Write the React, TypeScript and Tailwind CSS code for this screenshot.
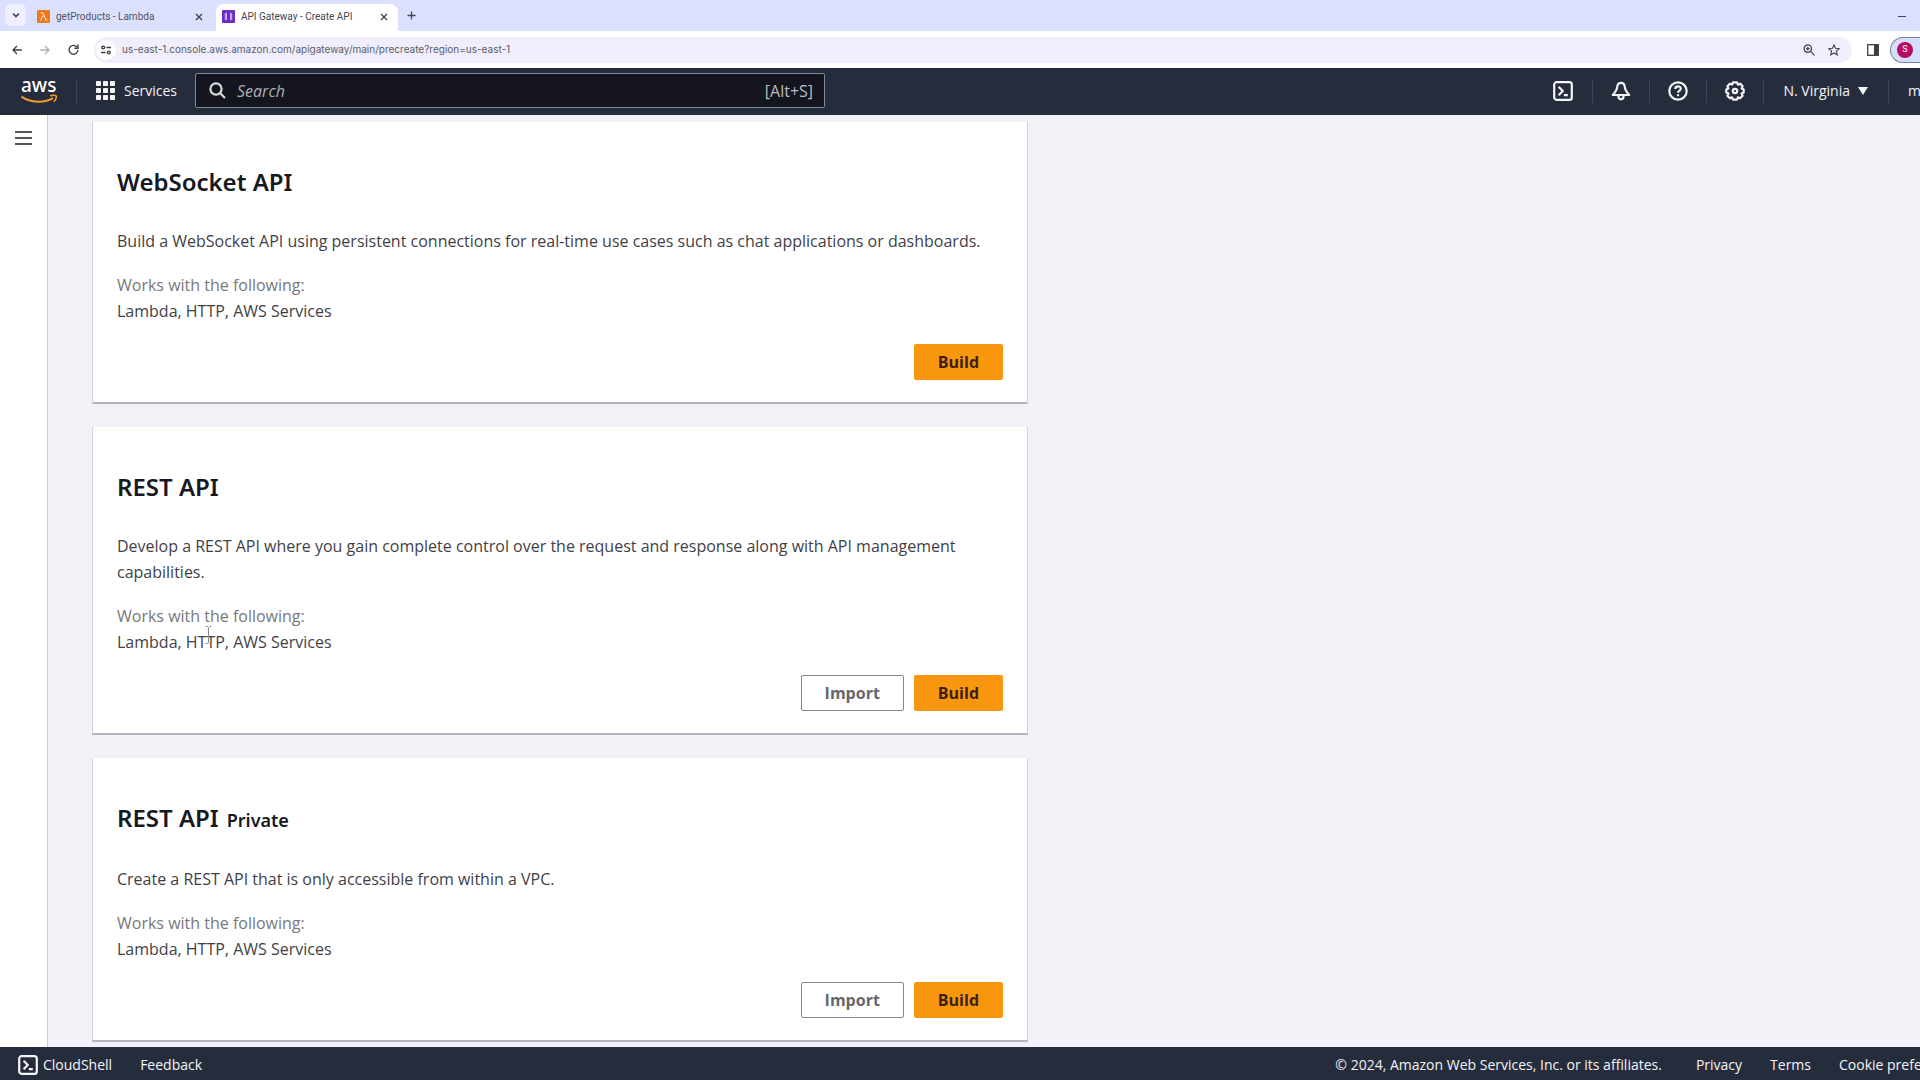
import React from "react";

/**
 * API option shown as a card on the "Create API" page
 */
interface ApiOption {
  id: number;
  title: string;
  suffix?: string;
  description: string;
  worksWith: string;
  canImport: boolean;
}

const apiOptions: ApiOption[] = [
  {
    id: 1,
    title: "WebSocket API",
    description:
      "Build a WebSocket API using persistent connections for real-time use cases such as chat applications or dashboards.",
    worksWith: "Lambda, HTTP, AWS Services",
    canImport: false,
  },
  {
    id: 2,
    title: "REST API",
    description:
      "Develop a REST API where you gain complete control over the request and response along with API management capabilities.",
    worksWith: "Lambda, HTTP, AWS Services",
    canImport: true,
  },
  {
    id: 3,
    title: "REST API",
    suffix: "Private",
    description:
      "Create a REST API that is only accessible from within a VPC.",
    worksWith: "Lambda, HTTP, AWS Services",
    canImport: true,
  },
];

const CloseIcon: React.FC = () => (
  <svg className="h-2 w-2" viewBox="0 0 8 8" stroke="#3c4043" strokeWidth="1.3">
    <path d="M1 1l6 6M7 1L1 7" />
  </svg>
);

const ConsoleIcon: React.FC = () => (
  <svg
    className="h-5 w-5 shrink-0"
    viewBox="0 0 20 20"
    fill="none"
    stroke="currentColor"
    strokeWidth="2.2"
    strokeLinejoin="round"
  >
    <rect x="1.2" y="1.2" width="17.6" height="17.6" rx="2.4" />
    <path d="M5.6 5.8l4.2 4.2-4.2 4.2M10.8 14.2h4" />
  </svg>
);

const Divider: React.FC = () => (
  <span className="h-6 w-px shrink-0 bg-[#3c4656]" />
);

/**
 * Browser tabs
 */
const TabStrip: React.FC = () => (
  <div className="flex h-[31px] items-end bg-[#dbe0fe] pr-[14px] pl-[5px] font-[Roboto,sans-serif] text-[10px] text-[#51545c]">
    <button
      aria-label="Search tabs"
      className="mb-[5px] flex h-[22px] w-[21px] items-center justify-center rounded-md bg-[#eef0ff]"
    >
      <svg className="h-2 w-2" viewBox="0 0 8 8" fill="none" stroke="#3c4043" strokeWidth="1.6">
        <path d="M1 2.5l3 3 3-3" />
      </svg>
    </button>

    <div className="flex h-[27px] w-[190px] items-center pr-[13px] pb-[2px] pl-[11px]">
      <svg className="mr-[6px] h-[13px] w-[13px] shrink-0" viewBox="0 0 13 13">
        <rect width="13" height="13" rx="1" fill="#ed7b1e" />
        <path
          d="M3.6 2.8h2l3.6 7.4h1.2M6 5.8l-2.6 4.6"
          fill="none"
          stroke="#fbd3a8"
          strokeWidth="1.2"
        />
      </svg>
      <span className="flex-1 truncate">getProducts - Lambda</span>
      <button aria-label="Close getProducts - Lambda">
        <CloseIcon />
      </button>
    </div>

    <div className="flex h-[27px] w-[182px] items-center rounded-t-lg bg-white pr-[10px] pb-[2px] pl-[6px]">
      <svg className="mr-[6px] h-[13px] w-[13px] shrink-0" viewBox="0 0 13 13">
        <rect width="13" height="13" rx="1" fill="#6a2cc4" />
        <path
          d="M5 2.4L2.8 3.4v6.2L5 10.6zM8 2.4l2.2 1v6.2L8 10.6z"
          fill="#c9a8f5"
        />
      </svg>
      <span className="flex-1 truncate text-[#44474e]">
        API Gateway - Create API
      </span>
      <button aria-label="Close API Gateway - Create API">
        <CloseIcon />
      </button>
    </div>

    <button aria-label="New tab" className="mb-[11px] ml-[9px]">
      <svg className="h-[9px] w-[9px]" viewBox="0 0 9 9" stroke="#44474e" strokeWidth="1.3">
        <path d="M4.5 0.5v8M0.5 4.5h8" />
      </svg>
    </button>

    <button aria-label="Minimize" className="mb-[14px] ml-auto h-px w-2 bg-[#44474e]" />
  </div>
);

/**
 * Browser navigation buttons and address bar
 */
const Toolbar: React.FC = () => (
  <div className="flex h-[37px] items-center overflow-hidden bg-white pl-[12px]">
    <div className="flex items-center gap-[18px]">
      <button aria-label="Back">
        <svg className="h-[10px] w-[10px]" viewBox="0 0 10 10" fill="none" stroke="#3c4043" strokeWidth="1.3">
          <path d="M9.8 5H1M5 1L1 5l4 4" />
        </svg>
      </button>
      <button aria-label="Forward">
        <svg className="h-[10px] w-[10px]" viewBox="0 0 10 10" fill="none" stroke="#a9acb2" strokeWidth="1.3">
          <path d="M0.2 5H9M5 1l4 4-4 4" />
        </svg>
      </button>
      <button aria-label="Reload">
        <svg className="h-[11px] w-[11px]" viewBox="0 0 11 11" fill="none" stroke="#3c4043" strokeWidth="1.4">
          <path d="M9.2 3.4A4.4 4.4 0 1 0 9.9 6" />
          <path d="M10 0.6v3.6H6.4" />
        </svg>
      </button>
    </div>

    <div className="ml-[15px] flex h-[26px] flex-1 items-center rounded-full bg-[#f0edfc] pr-3 pl-[2px]">
      <span className="flex h-5 w-5 items-center justify-center rounded-full bg-white">
        <svg className="h-[10px] w-[10px]" viewBox="0 0 10 10" fill="none" stroke="#3c4043" strokeWidth="1.4">
          <circle cx="2.2" cy="2.5" r="1.4" />
          <path d="M5.4 2.5H10M0 7.5h4.6" />
          <circle cx="7.8" cy="7.5" r="1.4" />
        </svg>
      </span>
      <input
        type="text"
        aria-label="Address"
        className="ml-[6px] flex-1 bg-transparent font-[Inter,sans-serif] text-[10px] text-[#5b5e66] outline-none"
        defaultValue="us-east-1.console.aws.amazon.com/apigateway/main/precreate?region=us-east-1"
      />
      <div className="flex items-center gap-[13px]">
        <button aria-label="Zoom">
          <svg className="h-3 w-3" viewBox="0 0 12 12" fill="none" stroke="#44474e" strokeWidth="1.3">
            <circle cx="4.8" cy="4.6" r="3.7" />
            <path d="M7.6 7.4l4 4M3 4.6h3.6M4.8 2.8v3.6" />
          </svg>
        </button>
        <button aria-label="Bookmark this tab">
          <svg className="h-3 w-3" viewBox="0 0 12 12" fill="none" stroke="#44474e" strokeWidth="1.1">
            <path d="M6 0.9l1.5 3.4 3.7.4-2.8 2.4.9 3.7L6 8.9l-3.3 1.9.9-3.7L0.8 4.7l3.7-.4z" />
          </svg>
        </button>
      </div>
    </div>

    <button aria-label="Side panel" className="ml-[15px]">
      <svg className="h-3 w-3" viewBox="0 0 12 12">
        <rect x="0.7" y="0.7" width="10.6" height="10.6" fill="none" stroke="#3c4043" strokeWidth="1.3" />
        <path d="M7 1h4.3v10H7z" fill="#3c4043" />
      </svg>
    </button>
    <button
      aria-label="Profile"
      className="ml-[11px] flex h-[26px] w-[30px] items-center rounded-l-full border border-r-0 border-[#7e7f96] bg-[#d3dffb] pl-[6px]"
    >
      <span className="flex h-4 w-4 items-center justify-center rounded-full bg-[#b80b62] font-[Roboto,sans-serif] text-[9px] text-white">
        S
      </span>
    </button>
  </div>
);

/**
 * AWS console header
 */
const ConsoleHeader: React.FC = () => (
  <header className="flex h-[47px] items-center overflow-hidden bg-[#252d3d] pb-[2px] text-[14px] font-medium text-[#f4f4f7]">
    <a href="#home" aria-label="AWS home" className="ml-5 shrink-0">
      <svg className="h-9 w-[38px]" viewBox="0 0 38 36">
        <text x="1" y="19" fill="#ffffff" fontFamily="Noto Sans, sans-serif" fontSize="19" fontWeight="500">
          aws
        </text>
        <path d="M1.5 23.600C11 30 24 30.400 33 25.200" fill="none" stroke="#f29a2e" strokeWidth="2" />
        <path d="M30 22.800c2.6-.6 5.6-.6 6.200.2.6.8-.4 3.800-2.400 5.800" fill="none" stroke="#f29a2e" strokeWidth="1.6" />
      </svg>
    </a>
    <span className="mr-[19px] ml-[18px] flex">
      <Divider />
    </span>
    <button className="flex items-center gap-[9px]">
      <svg className="h-[19px] w-[19px]" viewBox="0 0 19 19" fill="currentColor">
        {[0, 7, 14].map((y) =>
          [0, 7, 14].map((x) => (
            <rect key={`${x}-${y}`} x={x} y={y} width="5" height="5" rx="0.8" />
          ))
        )}
      </svg>
      Services
    </button>

    <div className="ml-[18px] flex h-[35px] w-[630px] items-center rounded-[2px] border border-[#7d8998] bg-[#15151f] pr-[11px] pl-[13px]">
      <svg className="h-[17px] w-[17px] shrink-0" viewBox="0 0 17 17" fill="none" stroke="#d5dbdb" strokeWidth="2.2">
        <circle cx="7" cy="7" r="5.6" />
        <path d="M11 11l5 5" />
      </svg>
      <input
        type="text"
        aria-label="Search"
        placeholder="Search"
        className="ml-[11px] min-w-0 flex-1 bg-transparent text-[16px] font-normal italic outline-none placeholder:text-[#a9b0b8]"
      />
      <span className="text-[16px] font-normal text-[#b9bec6]">[Alt+S]</span>
    </div>

    <div className="ml-auto flex shrink-0 items-center">
      <button aria-label="CloudShell">
        <ConsoleIcon />
      </button>
      <span className="ml-[19px] flex">
        <Divider />
      </span>
      <button aria-label="Notifications" className="mx-[18px]">
        <svg className="h-5 w-5" viewBox="0 0 20 20" fill="none" stroke="currentColor" strokeWidth="2.2" strokeLinejoin="round">
          <path d="M10 1.800C7.600 1.800 6.400 3.800 6.200 6 6 8.600 5.400 10 1.800 14h16.400C14.600 10 14 8.600 13.800 6 13.600 3.800 12.400 1.800 10 1.800z" />
          <path d="M7.400 14.600c0 5 5.200 5 5.200 0" />
        </svg>
      </button>
      <Divider />
      <button aria-label="Support" className="mx-[18px]">
        <svg className="h-5 w-5" viewBox="0 0 20 20" fill="none" stroke="currentColor" strokeWidth="2.2">
          <circle cx="10" cy="10" r="8.700" />
          <path d="M7.200 8c0-3.600 5.600-3.400 5.600-.4 0 2-2.800 2-2.800 4.200" />
          <path d="M10 13.200v2" />
        </svg>
      </button>
      <Divider />
      <button aria-label="Settings" className="mx-[18px]">
        <svg className="h-5 w-5" viewBox="0 0 20 20" fill="none" stroke="currentColor" strokeWidth="2.2" strokeLinejoin="round">
          <path d="M8 1.400h4l.9 2.200 2.400-.9 2.300 2.500-1 2.200 2.100 1v3.200l-2.100 1 1 2.200-2.500 2.500-2.200-1-.9 2.300H8l-.9-2.300-2.200 1-2.500-2.500 1-2.200-2.100-1V8.400l2.100-1-1-2.200 2.400-2.500 2.300.9z" />
          <circle cx="10" cy="10" r="2.200" />
        </svg>
      </button>
      <Divider />
      <button className="mx-[20px] flex items-center gap-2">
        N. Virginia
        <svg className="h-2 w-[10px]" viewBox="0 0 10 8" fill="currentColor">
          <path d="M0 0h10L5 8z" />
        </svg>
      </button>
      <Divider />
      <button className="ml-[19px] w-3 overflow-hidden text-left">m</button>
    </div>
  </header>
);

/**
 * Card with one API type and its actions
 */
const ApiCard: React.FC<{ option: ApiOption }> = ({ option }) => (
  <section className="border-r border-b-2 border-l border-[#d5d3d9] border-b-[#b5b4ba] bg-white px-6 pt-11 pb-[22px]">
    <h2 className="font-['Noto_Sans',sans-serif] text-[24px] leading-8 font-semibold text-[#16191f]">
      {option.title}
      {option.suffix && (
        <span className="ml-2 text-[18px]">{option.suffix}</span>
      )}
    </h2>
    <p className="mt-[30px] text-[16px] leading-[26px] text-[#3f3f47]">
      {option.description}
    </p>
    <dl className="mt-[18px] text-[16px] leading-[26px]">
      <dt className="text-[#77777d]">Works with the following:</dt>
      <dd className="text-[#3f3f47]">{option.worksWith}</dd>
    </dl>
    <div className="mt-[20px] flex justify-end gap-[10px] text-[16px] font-bold">
      {option.canImport && (
        <button className="h-[36px] rounded-[2px] border border-[#85858b] bg-white px-[23px] text-[#66666c]">
          Import
        </button>
      )}
      <button className="h-[36px] rounded-[2px] bg-[#f8970d] px-6 text-[#3d1f10]">
        Build
      </button>
    </div>
  </section>
);

const ConsoleFooter: React.FC = () => (
  <footer className="flex h-[33px] items-center overflow-hidden bg-[#252d3d] pt-[2px] text-[14px] font-medium whitespace-nowrap text-[#f4f4f7]">
    <button className="ml-[18px] flex items-center gap-[5px]">
      <ConsoleIcon />
      CloudShell
    </button>
    <button className="ml-[28px]">Feedback</button>
    <span className="ml-auto">
      © 2024, Amazon Web Services, Inc. or its affiliates.
    </span>
    <a href="#privacy" className="ml-[34px]">
      Privacy
    </a>
    <a href="#terms" className="ml-[28px]">
      Terms
    </a>
    <button className="ml-[28px] w-[81px] overflow-hidden text-left">
      Cookie preferences
    </button>
  </footer>
);

const App: React.FC = () => {
  return (
    <div className="flex h-screen flex-col overflow-hidden bg-[#f3f1f7] font-['Open_Sans','Noto_Sans',sans-serif]">
      <TabStrip />
      <Toolbar />
      <ConsoleHeader />

      <div className="flex min-h-0 flex-1">
        {/* Collapsed side navigation */}
        <nav className="w-12 shrink-0 border-r border-[#cfcdd4] bg-white pt-[15px] pl-[15px]">
          <button aria-label="Open navigation" className="block">
            <svg className="h-4 w-[17px]" viewBox="0 0 17 16" stroke="#55555c" strokeWidth="2">
              <path d="M0 2h17M0 8h17M0 14h17" />
            </svg>
          </button>
        </nav>

        <main className="relative min-w-0 flex-1 overflow-hidden pt-[7px] pl-11">
          <div className="flex max-w-[936px] flex-col gap-[23px]">
            {apiOptions.map((option) => (
              <ApiCard key={option.id} option={option} />
            ))}
          </div>

          {/* Text cursor over the second card */}
          <svg
            className="absolute top-[511px] left-[157px] h-[18px] w-[7px]"
            viewBox="0 0 7 18"
            fill="none"
            stroke="#8a8a90"
          >
            <path d="M0.5 0.5h2l1 1 1-1h2M3.5 1.5v15M0.5 17.5h2l1-1 1 1h2" />
          </svg>
        </main>
      </div>

      <ConsoleFooter />
    </div>
  );
};

export default App;
